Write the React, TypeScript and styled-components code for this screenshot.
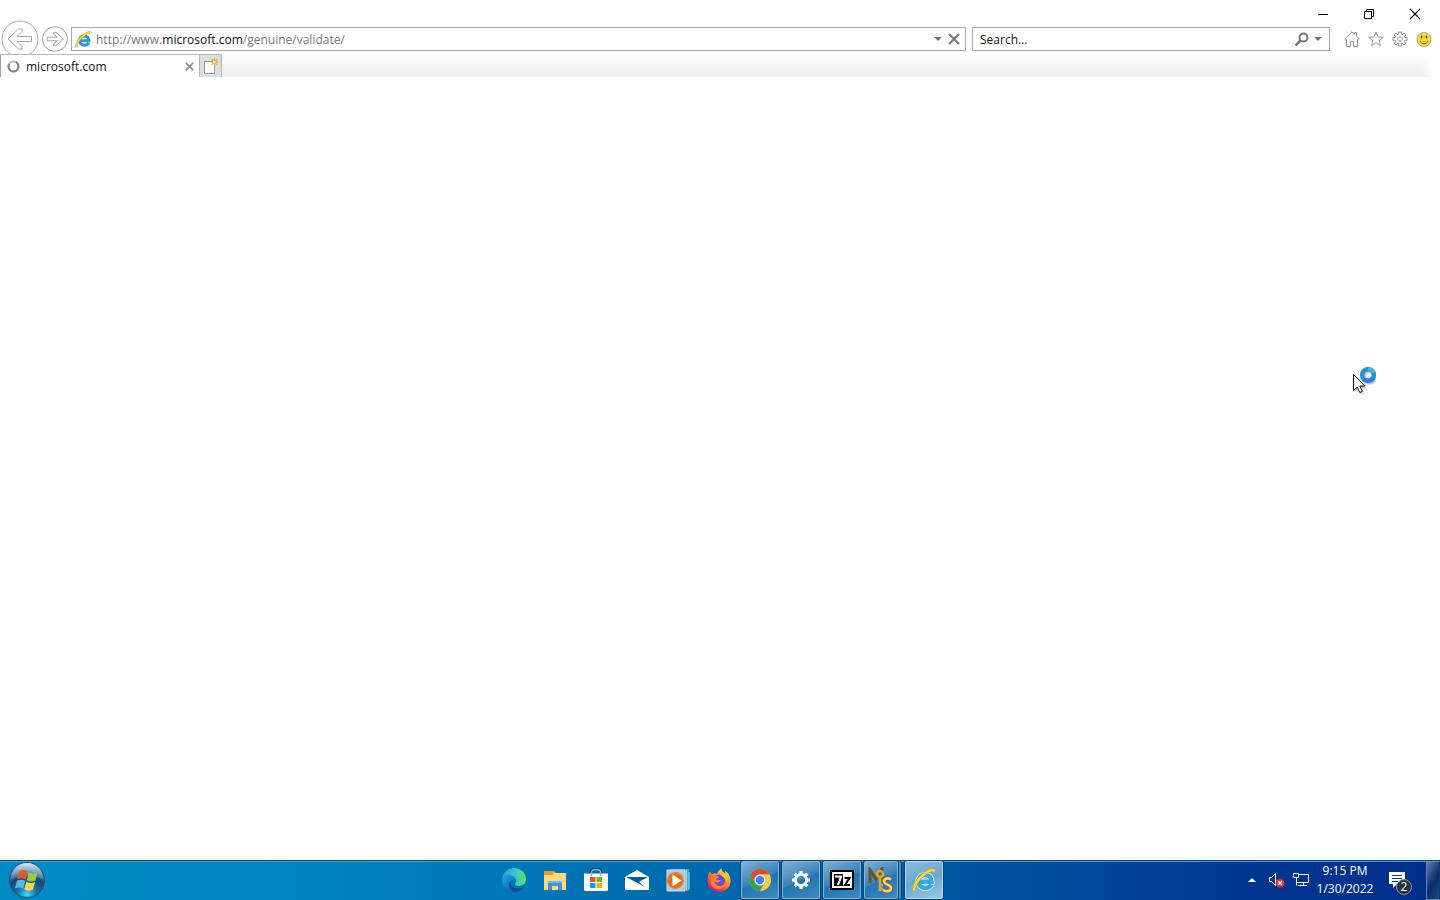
import React from "react";
import styled, { createGlobalStyle, css } from "styled-components";

const GlobalStyle = createGlobalStyle`
  * { box-sizing: border-box; }
  body {
    margin: 0;
    background: #fff;
    font-family: "Open Sans", "Noto Sans", sans-serif;
    font-size: 12px;
    line-height: 18px;
    color: #111;
  }
`;

const Desktop = styled.div`
  display: flex;
  flex-direction: column;
  min-height: 100vh;
`;

const PlainButton = styled.button`
  display: flex;
  align-items: center;
  justify-content: center;
  flex: none;
  padding: 0;
  border: 0;
  background: none;
  color: inherit;
  font: inherit;
`;

const Caption = styled.div`
  display: flex;
  justify-content: flex-end;
  height: 24px;
  padding: 4px 2px 0 0;
`;

const CaptionButton = styled(PlainButton)`
  width: 46px;
  height: 20px;
`;

const NavRow = styled.div`
  display: flex;
  align-items: center;
  height: 30px;
  padding: 0 8px 0 1px;
`;

const RoundButton = styled(PlainButton)<{ $size: number }>`
  width: ${(p) => p.$size}px;
  height: ${(p) => p.$size}px;
  margin-right: 3px;
`;

const Fields = styled.div`
  display: grid;
  grid-template-columns: 5fr 2fr;
  gap: 6px;
  flex: 1;
  min-width: 0;
`;

const Field = styled.div`
  display: flex;
  align-items: center;
  min-width: 0;
  height: 24px;
  border: 1px solid #a9a9a9;
  background: #fff;
  padding: 0 3px;
`;

const Address = styled.div`
  flex: 1;
  margin-left: 4px;
  padding-top: 2px;
  color: #7b7b7b;
  white-space: nowrap;
  overflow: hidden;
  outline: none;
`;

const Host = styled.span`
  color: #111;
`;

const SearchInput = styled.input`
  flex: 1;
  min-width: 0;
  padding: 2px 0 0 4px;
  border: 0;
  outline: 0;
  background: none;
  font: inherit;
  color: #111;
  &::placeholder { color: #111; opacity: 1; }
`;

const FieldButton = styled(PlainButton)`
  width: 16px;
  height: 20px;
`;

const Tools = styled.div`
  display: flex;
  gap: 8px;
  margin-left: 14px;
`;

const ToolButton = styled(PlainButton)`
  width: 16px;
  height: 16px;
`;

const TabRow = styled.div`
  position: relative;
  display: flex;
  height: 23px;
  padding-right: 8px;
`;

const Tab = styled.div`
  display: flex;
  align-items: center;
  width: 199px;
  padding: 0 2px 0 6px;
  border-top: 1px solid #b8b8b8;
  border-left: 1px solid #a0a0a0;
  background: #fff;
`;

const TabTitle = styled.span`
  flex: 1;
  margin-left: 6px;
  padding-top: 2px;
`;

const NewTab = styled(PlainButton)`
  width: 23px;
  border: 1px solid #b4b4b4;
  border-bottom: 0;
  background: #dedede;
`;

const TabStrip = styled.div`
  flex: 1;
  background:
    linear-gradient(to right, rgba(255, 255, 255, 0) calc(100% - 10px), #fff),
    linear-gradient(#fff, #f8f8f8 30%, #ededed);
`;

const Page = styled.main`
  position: relative;
  flex: 1;
`;

const Pointer = styled.svg`
  position: absolute;
  top: 288px;
  right: 60px;
`;

const Taskbar = styled.footer`
  display: grid;
  grid-template-columns: 1fr auto 1fr;
  height: 40px;
  border-top: 1px solid #0a4672;
  box-shadow: inset 0 1px #4c9dcb;
  background: linear-gradient(to right, #008ac6, #0085c1 20%, #0070b1 42%, #0058a3 65%, #003893 85%, #002c88);
  color: #fff;
`;

const StartButton = styled(PlainButton)`
  width: 54px;
  height: 38px;
`;

const Apps = styled.div`
  display: flex;
  gap: 3px;
  padding-right: 2px;
`;

const AppButton = styled(PlainButton)<{ $state?: "open" | "active" | "stack" }>`
  width: 38px;
  height: 38px;
  ${(p) =>
    p.$state &&
    css`
      border: 1px solid ${p.$state === "active" ? "#b4d8ee" : "#7db5dc"};
      border-radius: 2px;
      background: ${p.$state === "active"
        ? "linear-gradient(160deg, #8fbbdc, #6ba6d2 50%, #9cc9e8)"
        : "linear-gradient(155deg, #7fb0d4, #3d83b9 48%, #2474b0 52%, #3f8bc2)"};
      box-shadow: 0 0 0 1px #064475;
    `}
  ${(p) =>
    p.$state === "stack" &&
    css`
      width: 34px;
      margin-right: 4px;
      box-shadow: 0 0 0 1px #064475, 3px 0 0 0 #4d8fbe, 4px 0 0 0 #063f72;
    `}
`;

const Tray = styled.div`
  display: flex;
  justify-content: flex-end;
`;

const TrayButton = styled(PlainButton)<{ $width: number }>`
  width: ${(p) => p.$width}px;
  height: 38px;
`;

const Clock = styled(PlainButton)`
  flex-direction: column;
  width: 62px;
  height: 38px;
  margin-right: 6px;
  white-space: nowrap;
`;

const Badge = styled.span`
  position: absolute;
  right: 0;
  bottom: 4px;
  width: 16px;
  height: 16px;
  border: 1px solid #8795a8;
  border-radius: 8px;
  background: #26323f;
  font-size: 12px;
  line-height: 14px;
  text-align: center;
`;

const Notifications = styled(TrayButton)`
  position: relative;
  margin-right: 14px;
`;

const ShowDesktop = styled(PlainButton)`
  width: 14px;
  height: 39px;
  border: 1px solid #6285b7;
  border-right-color: #17376d;
  background: linear-gradient(120deg, #5e7eae, #0c2c68 55%, #1b4686);
`;

const IeLogo = ({ size, light }: { size: number; light?: boolean }) => (
  <svg width={size} height={size} viewBox="0 0 24 24" fill="none">
    {light && <path d="M19.500 16.500C18.300 18.800 16 20 13.200 20 9.300 20 6.300 17.300 6.300 13.500S9.300 7 13.200 7c3.900 0 6.500 2.700 6.300 6.800H8" stroke="#e4f4fc" strokeWidth="6" />}
    <path d="M19.500 16.500C18.300 18.800 16 20 13.200 20 9.300 20 6.300 17.300 6.300 13.500S9.300 7 13.200 7c3.900 0 6.500 2.700 6.300 6.800H8" stroke={light ? "#39a9e0" : "#3494d8"} strokeWidth="4.400" />
    <path d="M2.500 22.800C.5 19 5.500 11 12.500 5.800 17 2.300 21.300 1 22.500 3.200" stroke={light ? "#c8a72a" : "#b7a72c"} strokeWidth="3.200" />
    <path d="M2.500 22.500C.8 19 5.500 11 12.500 5.800 17 2.300 21.300 1.200 22.500 3.200" stroke="#fbdc35" strokeWidth="2.200" />
  </svg>
);

const Arrow = ({ size, flip }: { size: number; flip?: boolean }) => (
  <svg width={size} height={size} viewBox="0 0 38 38" fill="none" stroke="#aaa" strokeWidth={flip ? 1.5 : 1}>
    <circle cx="19" cy="19" r="18" fill="#fff" />
    <path transform={flip ? "matrix(-1 0 0 1 38 0)" : undefined} d="M7 19 17.500 9h3.500v2.500L16 16.500h14.500v5H16l5 5V29h-3.500Z" />
  </svg>
);

const Caret = () => (
  <svg width="8" height="4" viewBox="0 0 8 4"><path d="M0 0h8L4 4Z" fill="#777" /></svg>
);

const CloseX = ({ size, color, weight }: { size: number; color: string; weight: number }) => (
  <svg width={size} height={size} viewBox="0 0 12 12"><path d="m1 1 10 10M11 1 1 11" stroke={color} strokeWidth={weight} /></svg>
);

const gearTeeth = [0, 45, 90, 135, 180, 225, 270, 315];

const GearOutline = () => (
  <svg width="18" height="18" viewBox="0 0 18 18" fill="#fff" stroke="#909090">
    {gearTeeth.map((a) => <path key={a} transform={`rotate(${a} 9 9)`} d="M7.500 4V1h3v3" />)}
    <circle cx="9" cy="9" r="5.800" />
    {gearTeeth.map((a) => <path key={a} transform={`rotate(${a} 9 9)`} d="M8 2.500h2v2H8Z" stroke="none" />)}
    <circle cx="9" cy="9" r="2.500" />
  </svg>
);

const StartOrb = () => (
  <svg width="38" height="38" viewBox="0 0 38 38">
    <defs>
      <radialGradient id="orb" cx=".5" cy=".92" r=".9">
        <stop offset="0" stopColor="#47d9f4" /><stop offset=".28" stopColor="#137bac" />
        <stop offset=".6" stopColor="#17456f" /><stop offset="1" stopColor="#8fb8cf" />
      </radialGradient>
      <linearGradient id="gloss" x2="0" y2="1"><stop stopColor="#e0eff6" stopOpacity=".8" /><stop offset="1" stopColor="#9fc3d5" stopOpacity=".2" /></linearGradient>
    </defs>
    <circle cx="19" cy="19" r="17.500" fill="url(#orb)" stroke="#135078" />
    <path d="M3 18a16 16 0 0 1 32 0c-8-3-22-3-32 0Z" fill="url(#gloss)" />
    <path d="M11.500 10.500c3-2 5.700-1.700 8 .1l-2 8c-2.500-1.700-5-1.900-8.300-.3Z" fill="#e2592a" />
    <path d="M20.700 11.300c3 1.700 5.500 1.800 8.800.1l-2.100 8c-3 1.500-5.900 1.400-8.700-.2Z" fill="#99cb46" />
    <path d="M8.900 19.700c3-1.500 5.700-1.200 8.300.3l-2.100 7.700c-2.500-1.600-5-1.800-8.200-.1Z" fill="#58b6e6" />
    <path d="M18.400 20.700c2.800 1.700 5.700 1.800 8.700.2l-2.100 7.700c-3 1.700-6 1.500-8.700-.2Z" fill="#ffd152" />
  </svg>
);

const EdgeIcon = () => (
  <svg width="26" height="26" viewBox="0 0 26 26">
    <defs>
      <linearGradient id="edgeTop"><stop stopColor="#259ee0" /><stop offset=".5" stopColor="#32c2d2" /><stop offset="1" stopColor="#62df62" /></linearGradient>
      <linearGradient id="edgeLeft" x2="1" y2="1"><stop stopColor="#23a5e3" /><stop offset="1" stopColor="#0759a5" /></linearGradient>
    </defs>
    <path d="M1 12C2 5 7 1 13 1c7 0 12 5 12 11 0 5-4 7-7.500 7-3 0-4-1.300-3.400-2.500 1.800-2 1.500-4.500-.5-6C10 7.500 4 7.500 1 12Z" fill="url(#edgeTop)" />
    <path d="M1 12c2-4.500 8.500-5.500 12-2 .9.900 1.500 2 1.600 3-1.200-1.800-4.200-1-4.900 1.700C8.700 19 13 23.500 18 22c-2 2-5 3-8 2.500C4 23 .5 17.500 1 12Z" fill="url(#edgeLeft)" />
    <path d="M10 14c-1 4 2 7.500 7 7.500 3 0 5-1 6.500-2.200C21 24 16 26 12 24.500 7 22 6.500 16 10 14Z" fill="#124e93" />
  </svg>
);

const FolderIcon = () => (
  <svg width="24" height="22" viewBox="0 0 24 22">
    <path d="M1 2h10l2 2h10v17H1Z" fill="#e2a129" />
    <path d="M1 6h8l2-2h12v17H1Z" fill="#fbd97f" />
    <path d="M5 12h14v9h-4v-4H9v4H5Z" fill="#3d91d4" /><path d="M5 12h14v2H5Z" fill="#6fb9e8" />
  </svg>
);

const StoreIcon = () => (
  <svg width="24" height="24" viewBox="0 0 24 24">
    <path d="M7 7V4c0-4 10-4 10 0v3" fill="none" stroke="#1d3a53" strokeWidth="3" />
    <path d="M0 5.500h24V22l-1 1H1l-1-1Z" fill="#fff" />
    <path d="M7.500 8V4c0-3.500 9-3.500 9 0v4" fill="none" stroke="#6cbce8" strokeWidth="1.500" />
    <path d="M6 9h5.500v5H6Z" fill="#e65427" /><path d="M12.500 9H18v5h-5.500Z" fill="#72ae26" />
    <path d="M6 15h5.500v5H6Z" fill="#159cdb" /><path d="M12.500 15H18v5h-5.500Z" fill="#eeae22" />
  </svg>
);

const MailIcon = () => (
  <svg width="24" height="20" viewBox="0 0 24 20">
    <path d="M0 7 12 0l12 7v13H0Z" fill="#fff" />
    <path d="m1 7 22 0-9 5 5 4.500Z" fill="#085c91" />
  </svg>
);

const MediaIcon = () => (
  <svg width="24" height="23" viewBox="0 0 24 23">
    <path d="M5 0h18v22H5Z" fill="#559fcc" /><path d="M20.500 1v20M23 3v17" stroke="#a9d7ee" />
    <path d="M1 1h18v21H1Z" fill="#a9cce1" stroke="#c7e2ef" />
    <circle cx="9.500" cy="11.500" r="8.500" fill="#ef7e2d" /><circle cx="9.500" cy="11.500" r="7" fill="#e86d1d" />
    <path d="m6.500 5.500 9 6-9 6Z" fill="#fff" />
  </svg>
);

const FirefoxIcon = () => (
  <svg width="24" height="24" viewBox="0 0 24 24">
    <defs><linearGradient id="fire" x1=".9" x2=".2" y2="1"><stop stopColor="#fff052" /><stop offset=".4" stopColor="#ff9b23" /><stop offset=".75" stopColor="#ff394c" /><stop offset="1" stopColor="#d81577" /></linearGradient></defs>
    <path d="M3 3c.3 1.800 1 2.700 2 3.200C7 5 9 5.200 10 6c1.500-4 3-4.500 4.700-5.500-.3 2.500 2 3.500 3.300 5 .4-1 .4-2 .1-3 4 3 5.900 7 5.400 11.500C23 20 18 23.700 12 23.500 5 23.500.5 18.500.5 13 .5 9 1.500 6 3 3Z" fill="url(#fire)" />
    <circle cx="12" cy="12.500" r="6" fill="#7048d2" /><path d="M4.500 9c3-2 6.500-1.500 7.700.3-1 1-3.200.8-3.200 2.500 2 0 3 .8 5 .2-1 3-5 3.200-7 1 1 5.500 8 7 12 2.500-1.500 5-7 7-11 5S2.500 13.500 4.500 9Z" fill="#ff8426" />
    <path d="M14 5c4 1 6 4 5.500 8-1-2-2.500-4-5-5Z" fill="#ffcb35" />
  </svg>
);

const ChromeIcon = () => (
  <svg width="22" height="22" viewBox="0 0 22 22">
    <circle cx="11" cy="11" r="11" fill="#ddaa27" />
    <path d="M1.500 5.500A11 11 0 0 1 20.500 5.500H11a5.500 5.500 0 0 0-4.800 8Z" fill="#dc493b" />
    <path d="M1.500 5.500A11 11 0 0 0 11 22l4.800-8.200A5.500 5.500 0 0 1 6.200 13.500Z" fill="#36a15b" />
    <path d="M11 5.500h9.500A11 11 0 0 1 11 22l4.800-8.200Z" fill="#f7ca48" />
    <circle cx="11" cy="11" r="5.500" fill="#eaf1f3" /><circle cx="11" cy="11" r="4.200" fill="#4385ee" />
  </svg>
);

const SettingsIcon = () => (
  <svg width="20" height="20" viewBox="0 0 20 20" stroke="#fff" fill="none">
    <circle cx="10" cy="10" r="5.500" strokeWidth="3" />
    {gearTeeth.map((a) => <path key={a} transform={`rotate(${a} 10 10)`} d="M10 1v3" strokeWidth="3.200" />)}
  </svg>
);

const SevenZipIcon = () => (
  <svg width="24" height="20" viewBox="0 0 24 20" fill="none">
    <path d="M1 1h22v18H1Z" fill="#fff" stroke="#000" strokeWidth="2" />
    <path d="M4 4h9v12H4Z" fill="#000" />
    <path d="M5 6.500h6L8 15" stroke="#fff" strokeWidth="2.200" />
    <path d="M14.500 8h5l-4.500 7h5" stroke="#000" strokeWidth="2" />
  </svg>
);

const MasIcon = () => (
  <svg width="26" height="27" viewBox="0 0 26 27" fill="none">
    <path d="M2 16V3l6 9 6-10v12" stroke="#62532e" strokeWidth="3" />
    <circle cx="12" cy="7" r="3" stroke="#d9a938" strokeWidth="2.600" />
    <path d="M12 10v14M12 18h3M12 22h3" stroke="#d9a938" strokeWidth="2.600" />
    <path d="M23 12.500c-4-2.500-8-.5-6.500 3 1.500 3 7 2 6.500 6-.5 3-5 3.500-8 1.500" stroke="#79612e" strokeWidth="4.500" />
    <path d="M23 12.500c-4-2.500-8-.5-6.500 3 1.500 3 7 2 6.500 6-.5 3-5 3.500-8 1.500" stroke="#f4d684" strokeWidth="2.600" />
  </svg>
);

const apps: { name: string; icon: React.ReactNode; state?: "open" | "active" | "stack" }[] = [
  { name: "Microsoft Edge", icon: <EdgeIcon /> },
  { name: "File Explorer", icon: <FolderIcon /> },
  { name: "Microsoft Store", icon: <StoreIcon /> },
  { name: "Mail", icon: <MailIcon /> },
  { name: "Windows Media Player", icon: <MediaIcon /> },
  { name: "Firefox", icon: <FirefoxIcon /> },
  { name: "Google Chrome", icon: <ChromeIcon />, state: "open" },
  { name: "Settings", icon: <SettingsIcon />, state: "open" },
  { name: "7-Zip", icon: <SevenZipIcon />, state: "open" },
  { name: "Activation tool", icon: <MasIcon />, state: "stack" },
  { name: "Internet Explorer", icon: <IeLogo size={24} light />, state: "active" },
];

export default function App() {
  return (
    <Desktop>
      <GlobalStyle />
      <header>
        <Caption>
          <CaptionButton aria-label="Minimize">
            <svg width="10" height="10"><path d="M0 5.500h10" stroke="#000" /></svg>
          </CaptionButton>
          <CaptionButton aria-label="Restore">
            <svg width="10" height="10" fill="none" stroke="#000"><path d="M.5 2.500h7v7h-7ZM2.500 2.500v-2h7v7h-2" /></svg>
          </CaptionButton>
          <CaptionButton aria-label="Close window">
            <CloseX size={12} color="#000" weight={1.1} />
          </CaptionButton>
        </Caption>
        <NavRow>
          <RoundButton $size={38} aria-label="Back"><Arrow size={38} /></RoundButton>
          <RoundButton $size={26} aria-label="Forward"><Arrow size={26} flip /></RoundButton>
          <Fields>
            <Field>
              <IeLogo size={17} />
              <Address role="textbox" aria-label="Address" tabIndex={0}>
                http://www.<Host>microsoft.com</Host>/genuine/validate/
              </Address>
              <FieldButton aria-label="Show address history"><Caret /></FieldButton>
              <FieldButton aria-label="Stop"><CloseX size={12} color="#777" weight={2} /></FieldButton>
            </Field>
            <Field>
              <SearchInput type="text" aria-label="Search" placeholder="Search..." />
              <FieldButton aria-label="Run search">
                <svg width="14" height="14" fill="none" stroke="#777"><circle cx="8.500" cy="5.500" r="4" strokeWidth="2" /><path d="m5.500 8.500-5 5" strokeWidth="2.500" /></svg>
              </FieldButton>
              <FieldButton aria-label="Choose search provider"><Caret /></FieldButton>
            </Field>
          </Fields>
          <Tools>
            <ToolButton aria-label="Home">
              <svg width="16" height="16" fill="#fff" stroke="#909090"><path d="M.7 8 8 .8l2.500 2.500V1.500h2v3.700L15.300 8l-1.100 1-.7-.5v7h-4v-5h-3v5h-4v-7l-.7.500Z" /></svg>
            </ToolButton>
            <ToolButton aria-label="Favorites">
              <svg width="18" height="18" viewBox="0 0 18 18" fill="#fff" stroke="#909090"><path d="m9 1 2.200 5.600 6 .3-4.700 3.800 1.600 5.800L9 13.200l-5.100 3.300 1.600-5.800L.8 6.900l6-.3Z" /></svg>
            </ToolButton>
            <ToolButton aria-label="Tools"><GearOutline /></ToolButton>
            <ToolButton aria-label="Send a smile">
              <svg width="17" height="17" viewBox="0 0 17 17"><circle cx="8.500" cy="8.500" r="7.500" fill="#f8d63f" stroke="#b6a26a" /><ellipse cx="6" cy="5.800" rx="1" ry="1.700" fill="#655421" /><ellipse cx="11" cy="5.800" rx="1" ry="1.700" fill="#655421" /><path d="M4 10c2 4 7 4 9 0" fill="none" stroke="#7e6620" /></svg>
            </ToolButton>
          </Tools>
        </NavRow>
        <TabRow>
          <Tab>
            <svg width="13" height="13" fill="none"><circle cx="6.500" cy="6.500" r="5" stroke="#b8b8b8" strokeWidth="2" /><path d="M9 2.200A5 5 0 1 1 2.200 4" stroke="#858585" strokeWidth="2" /></svg>
            <TabTitle>microsoft.com</TabTitle>
            <FieldButton aria-label="Close tab"><CloseX size={9} color="#999" weight={2.4} /></FieldButton>
          </Tab>
          <NewTab aria-label="New tab">
            <svg width="17" height="19" viewBox="0 0 17 19"><path d="M2.500 4.500h10v12h-10Z" fill="#fff" stroke="#999" /><g stroke="#e4a936" strokeWidth="1.200"><path d="M12.500 1v8M8.500 5h8M9.700 2.200l5.600 5.600M15.300 2.200 9.700 7.800" /></g><circle cx="12.500" cy="5" r="1.500" fill="#ffe18c" /></svg>
          </NewTab>
          <TabStrip />
        </TabRow>
      </header>
      <Page>
        <Pointer width="30" height="34" viewBox="0 0 30 34">
          <defs><filter id="cursorShadow"><feDropShadow dx="1" dy="1" stdDeviation="1" floodOpacity=".35" /></filter></defs>
          <g filter="url(#cursorShadow)">
            <circle cx="18" cy="10" r="5.800" fill="none" stroke="#288ed5" strokeWidth="4.500" />
            <path d="M14 14a5.800 5.800 0 0 0 9-1" fill="none" stroke="#3978dc" strokeWidth="4.500" />
            <path d="M18 4.200a5.800 5.800 0 0 1 5.500 4" fill="none" stroke="#42b7d0" strokeWidth="4" />
            <path d="M3.500 9.500v16l3.700-3.500 2.600 5.500 2.500-1.200L9.700 21h5.100Z" fill="#fff" stroke="#111" />
          </g>
        </Pointer>
      </Page>
      <Taskbar>
        <div><StartButton aria-label="Start"><StartOrb /></StartButton></div>
        <Apps>
          {apps.map((app) => (
            <AppButton key={app.name} $state={app.state} aria-label={app.name}>{app.icon}</AppButton>
          ))}
        </Apps>
        <Tray>
          <TrayButton $width={24} aria-label="Show hidden icons">
            <svg width="8" height="4"><path d="m0 4 4-4 4 4Z" fill="#fff" /></svg>
          </TrayButton>
          <TrayButton $width={24} aria-label="Volume muted">
            <svg width="17" height="15" fill="none"><path d="M1.500 4.500h2l4-4v12l-4-4h-2Z" stroke="#fff" /><circle cx="12" cy="10" r="4.500" fill="#d62f3c" /><path d="m10 8 4 4m0-4-4 4" stroke="#fff" strokeWidth="1.200" /></svg>
          </TrayButton>
          <TrayButton $width={26} aria-label="Network">
            <svg width="17" height="15" fill="none" stroke="#fff"><path d="M5.500 1.500h10v8h-12M.5.500h5v4h-5ZM3.500 4.500v8M10.500 9.500v3M5 12.500h9" /></svg>
          </TrayButton>
          <Clock><span>9:15 PM</span><span>1/30/2022</span></Clock>
          <Notifications $width={30} aria-label="Notifications">
            <svg width="16" height="18"><path d="M0 1h16v12H8l-4 4v-4H0Z" fill="#fff" /><path d="M3 4.500h10M3 7.500h10M3 10.500h6" stroke="#123a87" /></svg>
            <Badge>2</Badge>
          </Notifications>
          <ShowDesktop aria-label="Show desktop" />
        </Tray>
      </Taskbar>
    </Desktop>
  );
}
